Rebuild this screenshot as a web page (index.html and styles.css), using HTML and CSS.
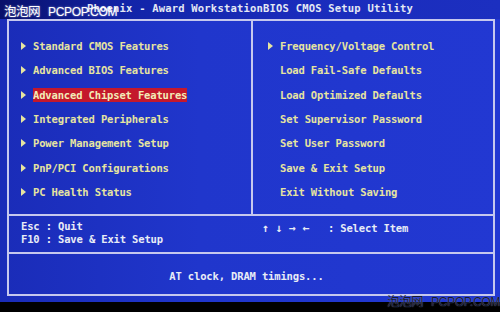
FILE: index.html
```html
<!DOCTYPE html>
<html lang="zh-CN">
<head>
    <meta charset="UTF-8">
    <meta name="viewport" content="width=device-width, initial-scale=1.0">
    <title>CMOS Setup Utility</title>
    <link rel="stylesheet" href="styles.css">
</head>
<body>
    <div class="screen">
        <div class="title">Phoenix - Award WorkstationBIOS CMOS Setup Utility</div>

        <div class="frame">
            <div class="menus">
                <ul class="menu menu-left">
                    <li><span class="arrow"></span><span>Standard CMOS Features</span></li>
                    <li><span class="arrow"></span><span>Advanced BIOS Features</span></li>
                    <li><span class="arrow"></span><span class="active">Advanced Chipset Features</span></li>
                    <li><span class="arrow"></span><span>Integrated Peripherals</span></li>
                    <li><span class="arrow"></span><span>Power Management Setup</span></li>
                    <li><span class="arrow"></span><span>PnP/PCI Configurations</span></li>
                    <li><span class="arrow"></span><span>PC Health Status</span></li>
                </ul>
                <ul class="menu menu-right">
                    <li><span class="arrow"></span><span>Frequency/Voltage Control</span></li>
                    <li><span class="slot"></span><span>Load Fail-Safe Defaults</span></li>
                    <li><span class="slot"></span><span>Load Optimized Defaults</span></li>
                    <li><span class="slot"></span><span>Set Supervisor Password</span></li>
                    <li><span class="slot"></span><span>Set User Password</span></li>
                    <li><span class="slot"></span><span>Save &amp; Exit Setup</span></li>
                    <li><span class="slot"></span><span>Exit Without Saving</span></li>
                </ul>
            </div>

            <div class="help">
                <div class="help-left">
                    <div>Esc : Quit</div>
                    <div>F10 : Save &amp; Exit Setup</div>
                </div>
                <div class="help-right"><span class="keys">↑ ↓ → ←</span>   : Select Item</div>
            </div>

            <div class="status">AT clock, DRAM timings...</div>
        </div>
    </div>

    <div class="mark mark-top"><span class="mark-cn">泡泡网</span><span>PCPOP.COM</span></div>
    <div class="mark mark-bottom"><span class="mark-cn">泡泡网</span><span>PCPOP.COM</span></div>
</body>
</html>
```

FILE: styles.css
```css
* {
    margin: 0;
    padding: 0;
    box-sizing: border-box;
}

body {
    width: 500px;
    height: 312px;
    background: #000;
    overflow: hidden;
    position: relative;
    font-family: 'DejaVu Sans Mono', 'Liberation Mono', monospace;
    font-weight: bold;
    font-size: 10.5px;
    letter-spacing: -0.15px;
}

.screen {
    width: 500px;
    height: 302px;
    background: linear-gradient(90deg, #1a2cb8 0%, #2036cc 40%, #2238d2 100%);
}

.title {
    height: 19px;
    line-height: 17px;
    text-align: center;
    color: #e4e8f4;
    letter-spacing: 0.2px;
    background: linear-gradient(90deg, #08106a 0%, #1224a8 25%, #1a2cbc 60%, #1c2fc0 100%);
}

.frame {
    margin: 0 5px 0 7px;
    height: 277px;
    border: 2px solid #c6c8ee;
    display: flex;
    flex-direction: column;
}

.menus {
    display: grid;
    grid-template-columns: 244px 1fr;
    height: 195px;
    border-bottom: 2px solid #c6c8ee;
}

.menu {
    list-style: none;
    padding-top: 13px;
    color: #e6e4a0;
}

.menu-left {
    padding-left: 12px;
    border-right: 2px solid #c6c8ee;
}

.menu-right {
    padding-left: 15px;
}

.menu li {
    display: flex;
    align-items: center;
    height: 24.3px;
}

.arrow,
.slot {
    width: 12px;
    flex-shrink: 0;
}

.arrow::before {
    content: '';
    display: block;
    width: 0;
    height: 0;
    border-left: 5px solid #e6e4a0;
    border-top: 4px solid transparent;
    border-bottom: 4px solid transparent;
}

.active {
    background: #c4182c;
    color: #f2ecb8;
    padding: 1px 0;
}

.help {
    display: grid;
    grid-template-columns: 244px 1fr;
    height: 38px;
    border-bottom: 2px solid #c6c8ee;
    color: #e8ecf6;
    line-height: 13px;
}

.help-left {
    padding: 4px 0 0 12px;
}

.help-right {
    padding: 6px 0 0 9px;
    white-space: pre;
}

.keys {
    font-size: 11.5px;
}

.status {
    flex: 1;
    display: flex;
    align-items: center;
    justify-content: center;
    padding: 4px 9px 0 0;
    color: #e8ecf6;
}

.mark {
    position: absolute;
    display: flex;
    align-items: baseline;
    gap: 8px;
    font-family: 'Liberation Sans', 'Noto Sans CJK SC', sans-serif;
    font-weight: normal;
    font-size: 12px;
    letter-spacing: -0.3px;
    white-space: nowrap;
}

.mark-cn {
    font-family: 'Noto Sans CJK SC', sans-serif;
    font-size: 12.5px;
    letter-spacing: -0.5px;
}

.mark-top {
    left: 4px;
    top: 1px;
    color: #fff;
    text-shadow: 0 0 2px rgba(255, 255, 255, 0.6);
}

.mark-bottom {
    right: 0;
    top: 291px;
    color: #141a30;
    text-shadow: 0 0 1px #8890b8;
}
```
